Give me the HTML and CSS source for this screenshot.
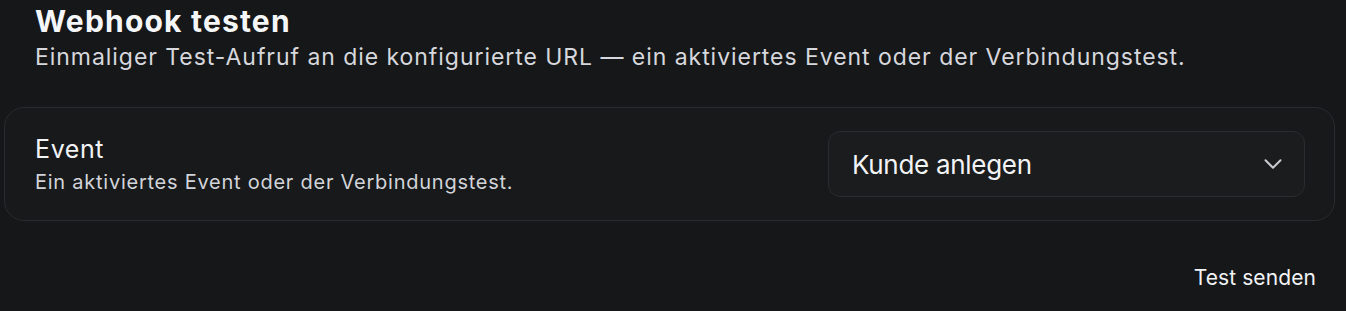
FILE: index.html
```html
<!DOCTYPE html>
<html lang="de">
<head>
    <meta charset="UTF-8">
    <meta name="viewport" content="width=device-width, initial-scale=1.0">
    <title>Webhook testen</title>
    <link rel="stylesheet" href="styles.css">
</head>
<body>

<div class="section">
    <div class="section-head">
        <h2>Webhook testen</h2>
        <p>Einmaliger Test-Aufruf an die konfigurierte URL — ein aktiviertes Event oder der Verbindungstest.</p>
    </div>

    <div class="card">
        <div class="field-text">
            <div class="field-label">Event</div>
            <div class="field-hint">Ein aktiviertes Event oder der Verbindungstest.</div>
        </div>
        <button class="select" type="button">
            <span>Kunde anlegen</span>
            <svg width="30" height="30" viewBox="0 0 24 24" fill="none" stroke="currentColor" stroke-width="1.6" stroke-linecap="round" stroke-linejoin="round"><path d="m6 9 6 6 6-6"/></svg>
        </button>
    </div>

    <div class="actions">
        <button class="ghost-button" type="button">Test senden</button>
    </div>
</div>

</body>
</html>
```

FILE: styles.css
```css
body {
    margin: 0;
    background-color: #161719;
    color: #f2f3f5;
    font-family: Inter, "Noto Sans", sans-serif;
}
.section {
    padding: 0 11px 0 4px;
}
.section-head {
    padding: 0 31px;
}
.section-head h2 {
    margin: 0;
    padding-top: 3px;
    font-size: 30px;
    line-height: 36px;
    font-weight: 700;
    letter-spacing: 1.2px;
    color: #f5f6f8;
}
.section-head p {
    margin: 0;
    font-size: 23px;
    line-height: 36px;
    color: #d6d8dd;
    letter-spacing: 0.95px;
}
.card {
    margin-top: 32px;
    display: flex;
    align-items: center;
    justify-content: space-between;
    padding: 23px 29px 23px 30px;
    border: 1px solid #2a2b2e;
    border-radius: 20px;
    background-color: #18191b;
}
.field-label {
    font-size: 25px;
    line-height: 30px;
    color: #f2f3f5;
    letter-spacing: 0.6px;
}
.field-hint {
    margin-top: 5px;
    font-size: 20px;
    line-height: 26px;
    color: #d2d4d9;
    letter-spacing: 0.75px;
}
.select {
    width: 477px;
    height: 66px;
    display: flex;
    align-items: center;
    justify-content: space-between;
    padding: 0 16px 0 23px;
    border: 1px solid #2a2b2e;
    border-radius: 12px;
    background-color: #1b1c1e;
    color: #f2f3f5;
    font-family: inherit;
    font-size: 26px;
    letter-spacing: -0.3px;
}
.select svg {
    color: #c9cbd0;
}
.actions {
    display: flex;
    justify-content: flex-end;
    margin-top: 35px;
}
.ghost-button {
    padding: 8px 19px;
    border: none;
    background: none;
    color: #f2f3f5;
    font-family: inherit;
    font-size: 21px;
    line-height: 28px;
    letter-spacing: 0.1px;
}
```
